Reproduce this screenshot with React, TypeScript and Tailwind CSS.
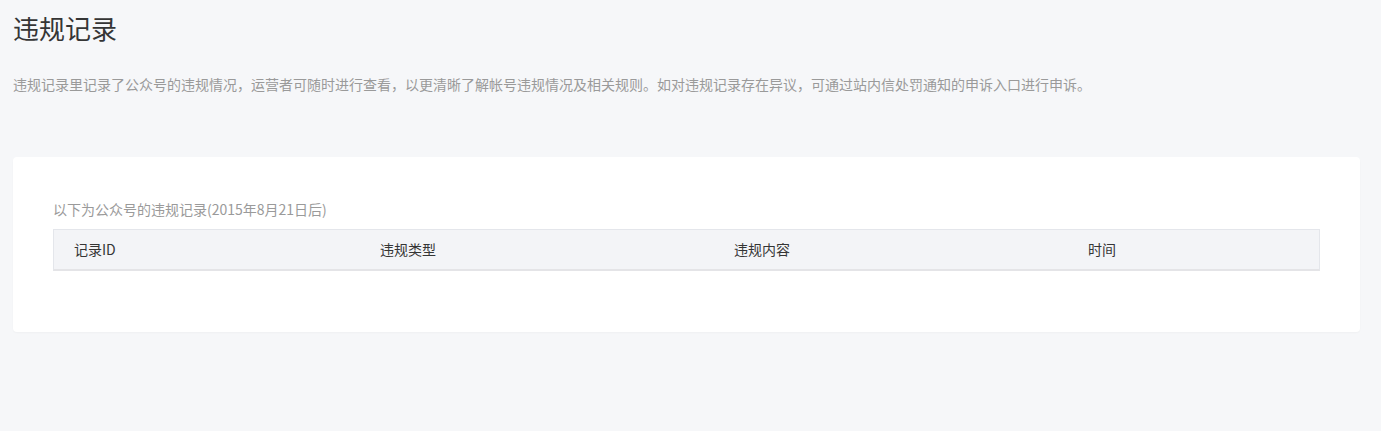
export default function App() {
  const font = { fontFamily: '"Noto Sans CJK SC", "Noto Sans", sans-serif' };
  return (
    <div className="min-h-[431px] w-full bg-[#f6f7f9] pl-[13px] pr-[21px]" style={font}>
      <div className="pt-[10px] h-[44px] text-[26px] leading-[36px] text-[#353535]">违规记录</div>
      <div className="mt-[30px] text-[14px] leading-[20px] text-[#9a9a9a]">
        违规记录里记录了公众号的违规情况，运营者可随时进行查看，以更清晰了解帐号违规情况及相关规则。如对违规记录存在异议，可通过站内信处罚通知的申诉入口进行申诉。
      </div>
      <div className="mt-[63px] bg-white rounded-[4px] px-[40px] pt-[43px] pb-[61px] shadow-[0_1px_2px_rgba(0,0,0,0.03)]">
        <div className="text-[14px] leading-[18px] text-[#9a9a9a] mb-[11px]">以下为公众号的违规记录(2015年8月21日后)</div>
        <div className="grid grid-cols-[306px_354px_354px_1fr] h-[42px] items-center bg-[#f3f4f7] border border-[#e4e6eb] border-b-2 border-b-[#e4e4e7] text-[14px] text-[#353535]">
          <div className="pl-[20px]">记录ID</div>
          <div className="pl-[20px]">违规类型</div>
          <div className="pl-[20px]">违规内容</div>
          <div className="pl-[20px]">时间</div>
        </div>
      </div>
    </div>
  );
}
